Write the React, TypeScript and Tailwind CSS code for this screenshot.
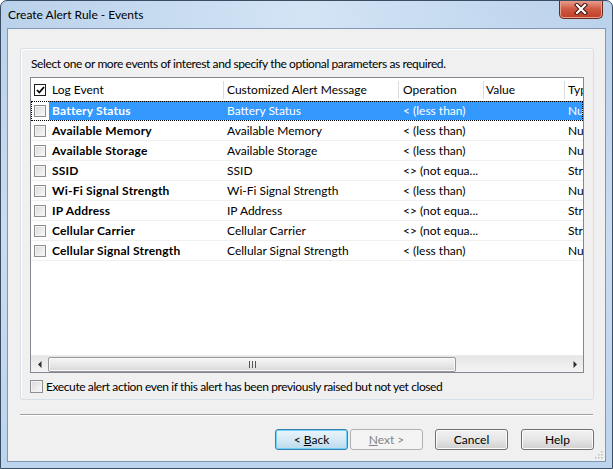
import React from 'react';

type Row = { event: string; message: string; op: string; type: string };

const rows: Row[] = [
  { event: 'Battery Status', message: 'Battery Status', op: '< (less than)', type: 'Numeric' },
  { event: 'Available Memory', message: 'Available Memory', op: '< (less than)', type: 'Numeric' },
  { event: 'Available Storage', message: 'Available Storage', op: '< (less than)', type: 'Numeric' },
  { event: 'SSID', message: 'SSID', op: '<> (not equa...', type: 'String' },
  { event: 'Wi-Fi Signal Strength', message: 'Wi-Fi Signal Strength', op: '< (less than)', type: 'Numeric' },
  { event: 'IP Address', message: 'IP Address', op: '<> (not equa...', type: 'String' },
  { event: 'Cellular Carrier', message: 'Cellular Carrier', op: '<> (not equa...', type: 'String' },
  { event: 'Cellular Signal Strength', message: 'Cellular Signal Strength', op: '< (less than)', type: 'Numeric' },
];

function Check() {
  return (
    <div className="w-[12px] h-[12px] shrink-0 border border-[#8f8f8f] bg-linear-to-br from-[#d9d9d9] to-[#fafafa] shadow-[inset_0_0_0_1px_#f2f2f2]" />
  );
}

function HeaderSep() {
  return <div className="ml-auto w-px h-[18px] bg-[#d9dce0]" />;
}

function Button({
  children,
  variant = 'normal',
}: {
  children: React.ReactNode;
  variant?: 'normal' | 'default' | 'disabled';
}) {
  const look =
    variant === 'default'
      ? 'border-[#3c7fb1] bg-linear-to-b from-[#eaf4fa] via-[#d5e9f5] to-[#bcdaec] shadow-[inset_0_0_0_1px_#6fd2f8] text-black'
      : variant === 'disabled'
        ? 'border-[#adb2b5] bg-[#f4f4f4] text-[#838383]'
        : 'border-[#707070] bg-linear-to-b from-[#f2f2f2] via-[#e6e6e6] to-[#d0d0d0] shadow-[inset_0_0_0_1px_#fbfbfb] text-black';
  return (
    <div className={`w-[73px] h-[21px] rounded-[3px] border flex items-center justify-center ${look}`}>
      {children}
    </div>
  );
}

export default function App() {
  return (
    <div className="w-[613px] h-[469px] flex flex-col rounded-t-[7px] border border-[#3b4d63] bg-linear-to-b from-[#b9d1ea] via-[#c9dcf0] to-[#bcd4ed] px-[6px] pb-[6px] font-['Lato',sans-serif] text-[12px] text-black overflow-hidden">
      {/* title bar */}
      <div className="h-[27px] flex items-start shrink-0 bg-linear-to-r from-transparent via-[#d3e4f5] to-transparent -mx-[6px] px-[6px]">
        <span className="ml-[1px] mt-[6px] leading-[16px]">Create Alert Rule - Events</span>
        <div className="ml-auto mr-[3px] -mt-px w-[44px] h-[19px] rounded-b-[5px] border border-t-0 border-[#6b2a20] bg-linear-to-b from-[#e8a596] via-[#cf5a42] to-[#c03c23] shadow-[inset_0_0_0_1px_#e9a08f] flex items-center justify-center">
          <svg width="14" height="12" viewBox="0 0 14 12">
            <path d="M3 2 L11 10 M11 2 L3 10" stroke="#3d1510" strokeWidth="4.2" strokeLinecap="square" />
            <path d="M3 2 L11 10 M11 2 L3 10" stroke="#ffffff" strokeWidth="2.2" strokeLinecap="square" />
          </svg>
        </div>
      </div>

      {/* client area */}
      <div className="flex-1 relative border border-[#7f97b4] bg-[#f0f0f0] flex flex-col">
        <div className="ml-[12px] mt-[19px] w-[574px] h-[352px] rounded-[3px] border border-[#d5dfe5] shadow-[inset_1px_1px_0_#ffffff] pl-[9px] pt-[7px] flex flex-col">
          <div className="ml-[1px] h-[15px] leading-[15px] tracking-[-0.4px]">
            Select one or more events of interest and specify the optional parameters as required.
          </div>

          {/* list view */}
          <div className="mt-[6px] w-[554px] h-[296px] border border-[#828790] bg-white flex flex-col overflow-hidden">
            <div className="h-[23px] flex shrink-0 bg-white">
              <div className="w-[193px] shrink-0 flex items-center pl-[3px]">
                <div className="w-[12px] h-[12px] border border-[#1e1e1e] bg-white flex items-center justify-center">
                  <svg width="9" height="8" viewBox="0 0 9 8">
                    <path d="M1 4 L3.3 6.5 L8 1" stroke="#000" strokeWidth="1.8" fill="none" />
                  </svg>
                </div>
                <span className="ml-[6px]">Log Event</span>
                <HeaderSep />
              </div>
              <div className="w-[175px] shrink-0 flex items-center pl-[3px]">
                <span>Customized Alert Message</span>
                <HeaderSep />
              </div>
              <div className="w-[85px] shrink-0 flex items-center pl-[4px]">
                <span>Operation</span>
                <HeaderSep />
              </div>
              <div className="w-[81px] shrink-0 flex items-center pl-[2px]">
                <span>Value</span>
                <HeaderSep />
              </div>
              <div className="w-[120px] shrink-0 flex items-center pl-[3px]">
                <span>Type</span>
              </div>
            </div>

            {rows.map((r, i) => {
              const sel = i === 0;
              return (
                <div
                  key={r.event}
                  className={`h-[20px] flex shrink-0 border-b border-[#f0f0f0] ${sel ? 'outline-1 outline-dotted outline-black -outline-offset-1' : ''}`}
                >
                  <div className="w-[18px] shrink-0 flex items-center pl-[3px]">
                    <Check />
                  </div>
                  <div className={`flex flex-1 items-center whitespace-nowrap ${sel ? 'bg-[#3399ff] text-white' : ''}`}>
                    <div className="w-[175px] shrink-0 pl-[3px] font-bold tracking-[0.2px]">{r.event}</div>
                    <div className="w-[175px] shrink-0 pl-[3px]">{r.message}</div>
                    <div className="w-[85px] shrink-0 pl-[4px]">{r.op}</div>
                    <div className="w-[81px] shrink-0 pl-[2px]"></div>
                    <div className="w-[120px] shrink-0 pl-[3px]">{r.type}</div>
                  </div>
                </div>
              );
            })}

            <div className="flex-1" />

            {/* horizontal scrollbar */}
            <div className="h-[17px] shrink-0 flex bg-linear-to-b from-[#e6e6e6] to-[#f4f4f4] border-t border-[#ececec]">
              <div className="w-[17px] flex items-center justify-center">
                <svg width="4" height="7" viewBox="0 0 4 7">
                  <path d="M3.5 0 L0 3.5 L3.5 7 Z" fill="#303030" />
                </svg>
              </div>
              <div className="flex-1 flex items-center">
                <div className="w-[408px] h-[15px] rounded-[2px] border border-[#979797] bg-linear-to-b from-[#f5f5f5] via-[#e9e9e9] to-[#d7d7d7] shadow-[inset_0_0_0_1px_#fbfbfb] flex items-center justify-center">
                  <svg width="7" height="7" viewBox="0 0 7 7">
                    <path d="M0.5 0 V7 M3.5 0 V7 M6.5 0 V7" stroke="#555" strokeWidth="1" />
                  </svg>
                </div>
              </div>
              <div className="w-[17px] flex items-center justify-center">
                <svg width="4" height="7" viewBox="0 0 4 7">
                  <path d="M0.5 0 L4 3.5 L0.5 7 Z" fill="#303030" />
                </svg>
              </div>
            </div>
          </div>

          <div className="mt-[7px] flex items-center h-[13px]">
            <div className="w-[13px] h-[13px] border border-[#8f8f8f] bg-linear-to-br from-[#d9d9d9] to-[#fafafa] shadow-[inset_0_0_0_1px_#f2f2f2]" />
            <span className="ml-[3px] leading-[13px] tracking-[-0.4px]">
              Execute alert action even if this alert has been previously raised but not yet closed
            </span>
          </div>
        </div>

        <div className="ml-[12px] mt-[14px] w-[573px] h-[2px] border-t border-[#a0a0a0] border-b border-b-white" />

        <div className="mt-[13px] ml-[267px] flex">
          <Button variant="default">
            <span>
              &lt; <span className="underline">B</span>ack
            </span>
          </Button>
          <div className="ml-[2px]">
            <Button variant="disabled">
              <span>
                <span className="underline">N</span>ext &gt;
              </span>
            </Button>
          </div>
          <div className="ml-[12px]">
            <Button>Cancel</Button>
          </div>
          <div className="ml-[13px]">
            <Button>Help</Button>
          </div>
        </div>

        {/* size grip */}
        <svg className="absolute right-[2px] bottom-[2px]" width="8" height="8" viewBox="0 0 8 8">
          {[
            [6, 0],
            [6, 3],
            [3, 3],
            [6, 6],
            [3, 6],
            [0, 6],
          ].map(([x, y]) => (
            <rect key={`${x}-${y}`} x={x} y={y} width="1.5" height="1.5" fill="#b8bcc2" />
          ))}
        </svg>
      </div>
    </div>
  );
}
